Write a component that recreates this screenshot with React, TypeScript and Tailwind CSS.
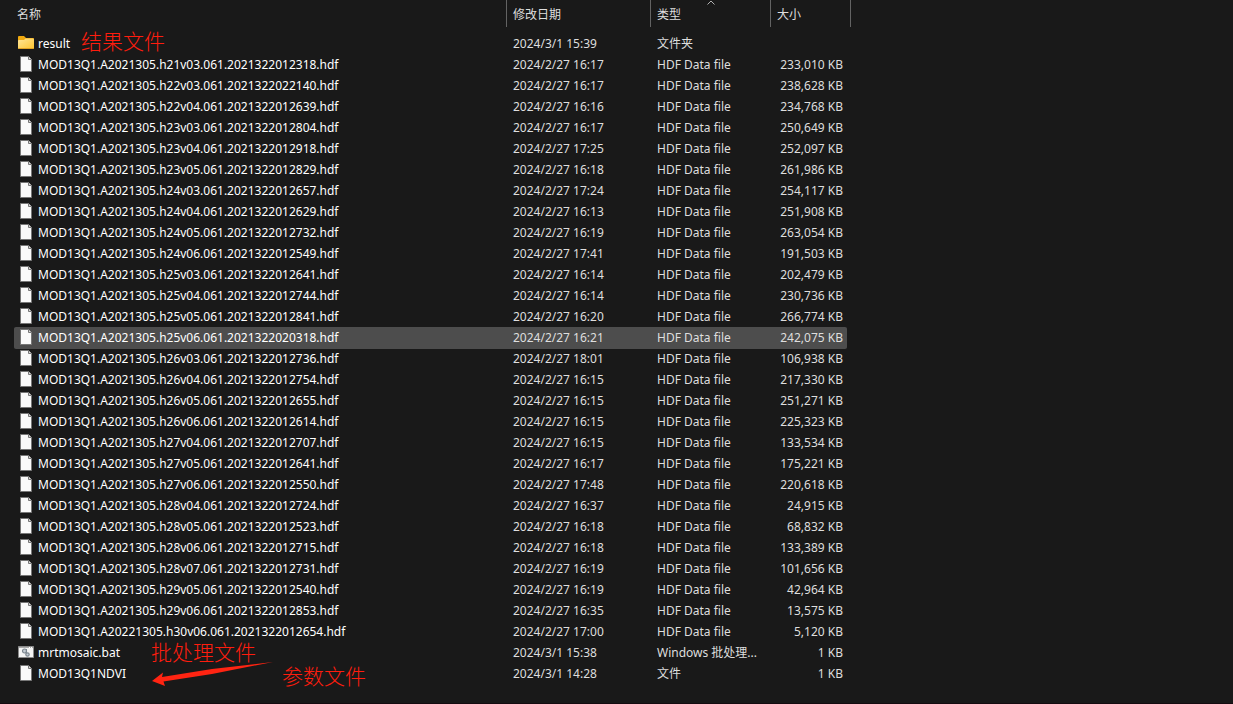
type Kind = "folder" | "file" | "script";

interface Entry {
  name: string;
  date: string;
  type: string;
  size: string;
  kind?: Kind;
  selected?: boolean;
}

const hdf = (name: string, date: string, size: string, selected = false): Entry => ({
  name: `${name}.hdf`,
  date: `2024/2/27 ${date}`,
  type: "HDF Data file",
  size: `${size} KB`,
  selected,
});

const entries: Entry[] = [
  { name: "result", date: "2024/3/1 15:39", type: "文件夹", size: "", kind: "folder" },
  hdf("MOD13Q1.A2021305.h21v03.061.2021322012318", "16:17", "233,010"),
  hdf("MOD13Q1.A2021305.h22v03.061.2021322022140", "16:17", "238,628"),
  hdf("MOD13Q1.A2021305.h22v04.061.2021322012639", "16:16", "234,768"),
  hdf("MOD13Q1.A2021305.h23v03.061.2021322012804", "16:17", "250,649"),
  hdf("MOD13Q1.A2021305.h23v04.061.2021322012918", "17:25", "252,097"),
  hdf("MOD13Q1.A2021305.h23v05.061.2021322012829", "16:18", "261,986"),
  hdf("MOD13Q1.A2021305.h24v03.061.2021322012657", "17:24", "254,117"),
  hdf("MOD13Q1.A2021305.h24v04.061.2021322012629", "16:13", "251,908"),
  hdf("MOD13Q1.A2021305.h24v05.061.2021322012732", "16:19", "263,054"),
  hdf("MOD13Q1.A2021305.h24v06.061.2021322012549", "17:41", "191,503"),
  hdf("MOD13Q1.A2021305.h25v03.061.2021322012641", "16:14", "202,479"),
  hdf("MOD13Q1.A2021305.h25v04.061.2021322012744", "16:14", "230,736"),
  hdf("MOD13Q1.A2021305.h25v05.061.2021322012841", "16:20", "266,774"),
  hdf("MOD13Q1.A2021305.h25v06.061.2021322020318", "16:21", "242,075", true),
  hdf("MOD13Q1.A2021305.h26v03.061.2021322012736", "18:01", "106,938"),
  hdf("MOD13Q1.A2021305.h26v04.061.2021322012754", "16:15", "217,330"),
  hdf("MOD13Q1.A2021305.h26v05.061.2021322012655", "16:15", "251,271"),
  hdf("MOD13Q1.A2021305.h26v06.061.2021322012614", "16:15", "225,323"),
  hdf("MOD13Q1.A2021305.h27v04.061.2021322012707", "16:15", "133,534"),
  hdf("MOD13Q1.A2021305.h27v05.061.2021322012641", "16:17", "175,221"),
  hdf("MOD13Q1.A2021305.h27v06.061.2021322012550", "17:48", "220,618"),
  hdf("MOD13Q1.A2021305.h28v04.061.2021322012724", "16:37", "24,915"),
  hdf("MOD13Q1.A2021305.h28v05.061.2021322012523", "16:18", "68,832"),
  hdf("MOD13Q1.A2021305.h28v06.061.2021322012715", "16:18", "133,389"),
  hdf("MOD13Q1.A2021305.h28v07.061.2021322012731", "16:19", "101,656"),
  hdf("MOD13Q1.A2021305.h29v05.061.2021322012540", "16:19", "42,964"),
  hdf("MOD13Q1.A2021305.h29v06.061.2021322012853", "16:35", "13,575"),
  hdf("MOD13Q1.A20221305.h30v06.061.2021322012654", "17:00", "5,120"),
  { name: "mrtmosaic.bat", date: "2024/3/1 15:38", type: "Windows 批处理...", size: "1 KB", kind: "script" },
  { name: "MOD13Q1NDVI", date: "2024/3/1 14:28", type: "文件", size: "1 KB" },
];

const iconBox = "mb-px h-4 w-4 shrink-0";

function FolderIcon() {
  return (
    <svg className={iconBox} viewBox="0 0 16 16" aria-hidden="true">
      <defs>
        <linearGradient id="folder-front" x1="0" y1="0" x2="1" y2="1">
          <stop offset="0" stopColor="#ffe69a" />
          <stop offset="1" stopColor="#fdc52f" />
        </linearGradient>
      </defs>
      <path d="M0 2a1 1 0 0 1 1-1h5l2 2h7a1 1 0 0 1 1 1v7H0z" fill="#f0a90f" />
      <path d="M0 6a1 1 0 0 1 1-1h5l1.500-1.500H15a1 1 0 0 1 1 1V13a1 1 0 0 1-1 1H1a1 1 0 0 1-1-1z" fill="url(#folder-front)" />
      <path d="M.5 13.500h15" stroke="#e2a325" />
    </svg>
  );
}

function FileIcon() {
  return (
    <svg className={iconBox} viewBox="0 0 16 16" aria-hidden="true">
      <path d="M2.500.5h8l3 3v12h-11z" fill="#fafafa" stroke="#777" />
      <path d="M10.500.5v3h3" fill="#ddd" stroke="#777" />
    </svg>
  );
}

function ScriptIcon() {
  return (
    <svg className={iconBox} viewBox="0 0 16 16" aria-hidden="true">
      <path d="M.5 2.500h15v11H.5z" fill="#f4f4f4" stroke="#8a8a8a" />
      <path d="M1 3.500h14" stroke="#aaa" />
      <path d="M11 3.500h3" stroke="#fff" strokeDasharray="1 1" />
      <circle cx="6.500" cy="7" r="2" fill="#c3cbd2" stroke="#7d8790" strokeWidth="1.200" />
      <circle cx="9.500" cy="10.500" r="1.700" fill="#c3cbd2" stroke="#7d8790" strokeWidth="1.200" />
      <path d="M8.500 5v4" stroke="#7d8790" />
    </svg>
  );
}

const icons = { folder: FolderIcon, file: FileIcon, script: ScriptIcon };

const header = "h-[27px] border-r border-[#636363] p-0 text-left font-normal";
const headerButton = "relative block h-[27px] w-full pt-px text-left";
const note = "absolute whitespace-nowrap text-[21px] leading-6 font-light text-[#ff1d0e]";

export default function App() {
  return (
    <main
      lang="zh-CN"
      className="relative min-h-screen overflow-x-auto border-b border-[#150b10] bg-[#191919] pl-3.5 font-['Noto_Sans','Noto_Sans_CJK_SC',sans-serif] text-[12px] leading-[21px] text-[#dedede]"
    >
      <table className="table-fixed border-separate border-spacing-0 whitespace-nowrap">
        <colgroup>
          <col className="w-[493px]" />
          <col className="w-[144px]" />
          <col className="w-[120px]" />
          <col className="w-[76px]" />
          <col className="w-1" />
        </colgroup>
        <thead>
          <tr>
            <th scope="col" className={header}>
              <button type="button" className={`${headerButton} pl-[3px]`}>名称</button>
            </th>
            <th scope="col" className={header}>
              <button type="button" className={`${headerButton} pl-1.5`}>修改日期</button>
            </th>
            <th scope="col" className={header} aria-sort="ascending">
              <button type="button" className={`${headerButton} pl-1.5`}>
                类型
                <svg className="absolute inset-x-0 top-0 mx-auto h-[5px] w-2" viewBox="0 0 8 5" aria-hidden="true">
                  <path d="M.5 4.500 4 1l3.500 3.500" fill="none" stroke="#b0b0b0" />
                </svg>
              </button>
            </th>
            <th scope="col" colSpan={2} className={header}>
              <button type="button" className={`${headerButton} pl-1.5`}>大小</button>
            </th>
          </tr>
          <tr aria-hidden="true">
            <td colSpan={5} className="h-1.5 p-0" />
          </tr>
        </thead>
        <tbody>
          {entries.map((entry) => {
            const Icon = icons[entry.kind ?? "file"];
            const fill = entry.selected ? "bg-[#4d4d4d] shadow-[0_1px_0_#4d4d4d]" : "";
            return (
              <tr key={entry.name} aria-selected={entry.selected} className="h-[21px]">
                <td className={`rounded-l-xs p-0 text-white ${fill}`}>
                  <div className="flex h-[21px] items-center gap-1 pl-1">
                    <Icon />
                    <span>{entry.name}</span>
                  </div>
                </td>
                <td className={`p-0 pl-1.5 ${fill}`}>{entry.date}</td>
                <td className={`p-0 pl-1.5 ${fill}`}>{entry.type}</td>
                <td className={`rounded-r-xs p-0 pr-1 text-right ${fill}`}>{entry.size}</td>
                <td className="p-0" />
              </tr>
            );
          })}
        </tbody>
      </table>

      <span className={`${note} left-[81px] top-[29px]`}>结果文件</span>
      <span className={`${note} left-[151px] top-[640px]`}>批处理文件</span>
      <span className={`${note} left-[282px] top-[664px]`}>参数文件</span>
      <svg className="absolute left-[152px] top-[661px] h-[26px] w-[122px]" viewBox="0 0 122 26" aria-hidden="true">
        <path d="M0 20 11 11.500 10 16 60 8 121 1 60 13 11.500 20.500 13 25z" fill="#ff2412" />
      </svg>
    </main>
  );
}
